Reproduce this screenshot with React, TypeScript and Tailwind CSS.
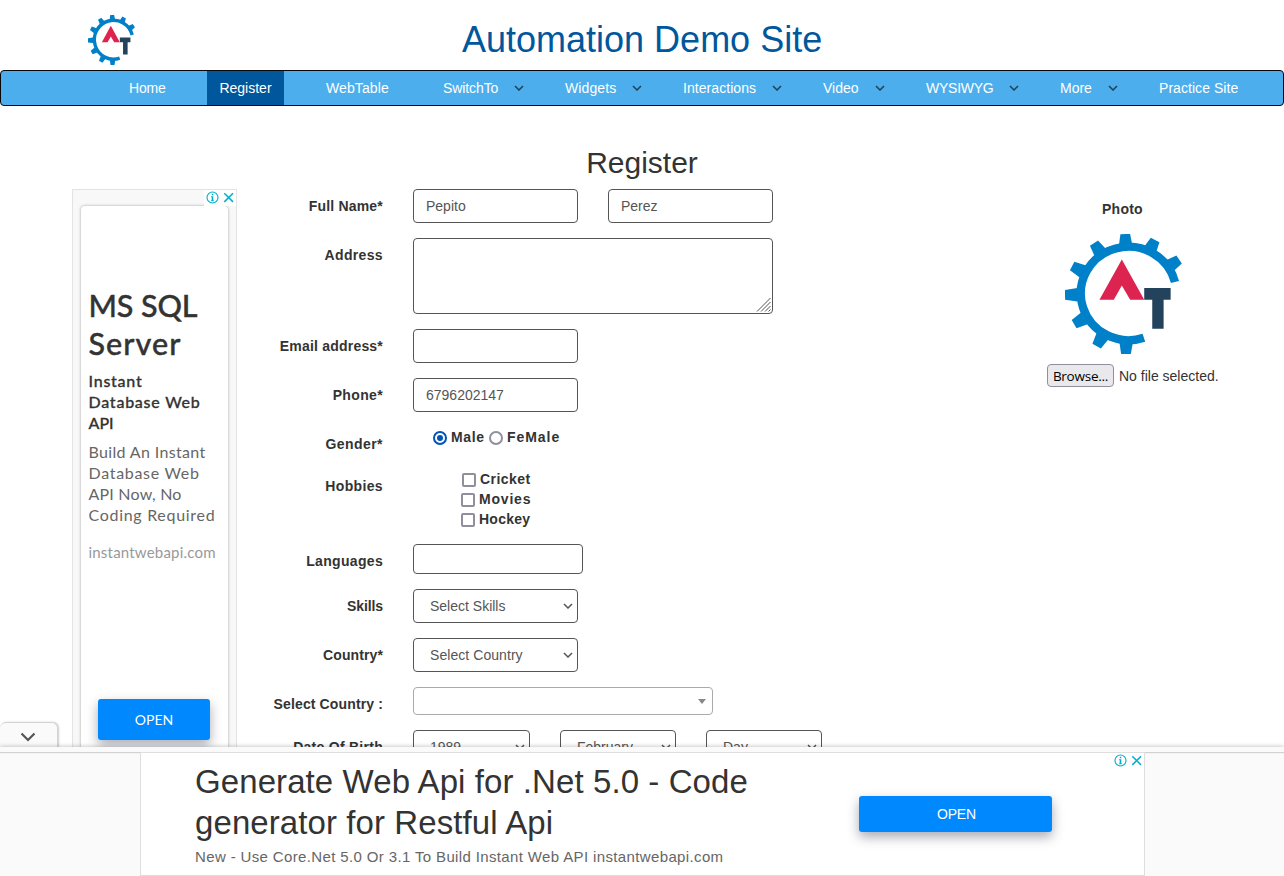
import type { ReactNode } from 'react';

const teeth = [
  { angle: -2, top: 131 },
  { angle: 27, top: 129 },
  { angle: 56, top: 125 },
  { angle: -33, top: 129 },
  { angle: -63, top: 127 },
  { angle: -91, top: 126 },
  { angle: -120, top: 129 },
  { angle: -150, top: 130 },
  { angle: -179, top: 131 },
];

function Logo({ className }: { className: string }) {
  return (
    <svg className={className} viewBox="107 131 350 362" preserveAspectRatio="none">
      <g fill="#0080c8">
        {teeth.map((t) => (
          <path key={t.angle} d={`M279 ${t.top}h29l6 37h-41z`} transform={`rotate(${t.angle} 293 312)`} />
        ))}
      </g>
      <path d="M436 276A143 141 0 1 0 343 444" fill="none" stroke="#0080c8" strokeWidth="25" />
      <path d="M277 208l67 121h-42l-25-43-24 43h-43z" fill="#dd2350" />
      <path d="M344 294h79v35h-21v88h-34v-88h-24z" fill="#23435c" />
    </svg>
  );
}

function Chevron({ className = '' }: { className?: string }) {
  return (
    <svg className={`h-[6px] w-[10px] shrink-0 ${className}`} viewBox="0 0 10 6" fill="none" stroke="currentColor" strokeWidth="1.5">
      <path d="M1 1l4 4 4-4" />
    </svg>
  );
}

const navItems = [
  { label: 'SwitchTo', width: 'w-[122px]', spacing: 'tracking-[-0.1px]', menu: true },
  { label: 'Widgets', width: 'w-[118px]', spacing: 'tracking-[0.1px]', menu: true },
  { label: 'Interactions', width: 'w-[140px]', spacing: 'tracking-[0.06px]', menu: true },
  { label: 'Video', width: 'w-[103px]', spacing: '', menu: true },
  { label: 'WYSIWYG', width: 'w-[134px]', spacing: 'tracking-[-0.25px]', menu: true },
  { label: 'More', width: 'w-[99px]', spacing: '', menu: true },
  { label: 'Practice Site', width: 'w-[100px]', spacing: 'tracking-[0.05px]', menu: false },
];

function AdMarks() {
  return (
    <svg className="h-[13px] w-[29px]" viewBox="0 0 29 13" fill="none" stroke="#00aecd">
      <circle cx="6.5" cy="6.5" r="5.5" strokeWidth="1.1" />
      <path d="M6.5 5.3v4.7" strokeWidth="1.6" />
      <path d="M5 5.7h1.5M5 9.8h3" strokeWidth="0.8" />
      <path d="M5.8 3.5h1.5" strokeWidth="1.5" />
      <path d="M18.3 2.2l8.7 8.7M27 2.2l-8.7 8.7" strokeWidth="1.5" />
    </svg>
  );
}

function Row({ label, spacing = 'tracking-[0.2px]', children }: { label: string; spacing?: string; children: ReactNode }) {
  return (
    <div className="mb-[15px] flex">
      <div className={`w-[146px] shrink-0 pt-[7px] text-right leading-5 font-bold whitespace-nowrap ${spacing}`}>{label}</div>
      <div className="ml-[30px] flex">{children}</div>
    </div>
  );
}

const box = 'rounded-[4px] border border-[#555] bg-white text-[#555]';

function Field({ value = '', className = '' }: { value?: string; className?: string }) {
  return <input readOnly value={value} className={`${box} h-[34px] w-[165px] px-3 outline-none ${className}`} />;
}

function Picker({ value, className }: { value: string; className: string }) {
  return (
    <div className={`${box} flex h-[34px] items-center justify-between pr-[4px] pl-4 ${className}`}>
      <span>{value}</span>
      <Chevron />
    </div>
  );
}

function Radio({ checked = false }: { checked?: boolean }) {
  return (
    <span className={`mt-px mr-[4px] flex size-[14px] items-center justify-center rounded-full border-2 ${checked ? 'border-[#0053b8]' : 'border-[#8f8f9d]'}`}>
      {checked && <span className="size-[6px] rounded-full bg-[#0053b8]" />}
    </span>
  );
}

function Check({ label, className = '' }: { label: string; className?: string }) {
  return (
    <div className={`flex h-5 items-center font-bold ${className}`}>
      <span className="mt-[2px] mr-[4px] size-[14px] rounded-[2px] border-2 border-[#8f8f9d]" />
      {label}
    </div>
  );
}

function SideAd() {
  return (
    <aside className="ml-[72px] h-[600px] w-[165px] shrink-0 border border-[#e3e3e3] bg-[#f8f8f8] font-['Lato',sans-serif]">
      <div className="flex h-[16px] justify-end">
        <div className="flex w-[32px] items-start bg-white pt-px pl-[2px]"><AdMarks /></div>
      </div>
      <div className="mx-[8px] flex h-[575px] flex-col rounded-[4px] bg-white pt-[80px] pr-[8px] pl-[7.5px] shadow-[0_0_3px_rgba(0,0,0,0.35)]">
        <div className="text-[30.5px] leading-[38px] font-medium whitespace-nowrap text-[#333] [-webkit-text-stroke:0.4px_#333]">
          <div className="tracking-[-0.1px]">MS SQL</div>
          <div className="tracking-[1.05px]">Server</div>
        </div>
        <div className="mt-[8px] text-[16px] leading-[21px] font-medium tracking-[0.75px] whitespace-nowrap text-[#333] [-webkit-text-stroke:0.3px_#333]">
          Instant<br />Database Web<br /><span className="tracking-[0px]">API</span>
        </div>
        <div className="mt-[8px] text-[16px] leading-[21px] tracking-[0.7px] whitespace-nowrap text-[#666]">
          <span className="tracking-[0.35px]">Build An Instant</span><br />Database Web<br /><span className="tracking-[0.2px]">API Now, No</span><br />Coding Required
        </div>
        <div className="mt-[17px] text-[15px] leading-[20px] tracking-[0.2px] whitespace-nowrap text-[#999]">instantwebapi.com</div>
        <div className="mt-[137px] ml-[9.5px] flex h-[41px] w-[112px] shrink-0 items-center justify-center rounded-[3px] bg-[#0088ff] text-[14px] text-white shadow-[0_5px_12px_rgba(40,45,70,0.4)]">OPEN</div>
      </div>
    </aside>
  );
}

function BottomAd() {
  return (
    <div className="absolute inset-x-0 top-[722px] h-[154px]">
      <div className="flex h-[25px] w-[58px] items-center justify-center rounded-t-[6px] border-t border-r border-[#d4d4d4] bg-[#fafafa] pt-[4px] pr-[2px] shadow-[1px_0_2px_rgba(0,0,0,0.2)]">
        <svg className="h-[10px] w-[16px]" viewBox="0 0 16 10" fill="none" stroke="#555" strokeWidth="2.2"><path d="M1.5 1.5L8 8l6.5-6.5" /></svg>
      </div>
      <div className="relative flex h-[129px] flex-col bg-[#fafafa] shadow-[0_-1px_4px_rgba(0,0,0,0.2)]">
        <div className="h-[5px] shrink-0 shadow-[0_1px_1px_rgba(0,0,0,0.16)]" />
        <div className="ml-[140px] flex h-[124px] w-[1005px] border border-[#dedede] bg-white">
          <div className="w-[718px] shrink-0 pt-[8px] pl-[54px]">
            <div className="text-[33px] leading-[41px] tracking-[0.09px] whitespace-nowrap text-[#333]">Generate Web Api for .Net 5.0 - Code<br />generator for Restful Api</div>
            <div className="mt-[4px] text-[15px] leading-[20px] tracking-[0.365px] whitespace-nowrap text-[#666]">New - Use Core.Net 5.0 Or 3.1 To Build Instant Web API instantwebapi.com</div>
          </div>
          <div className="mt-[43px] flex h-[36px] w-[193px] shrink-0 items-center justify-center rounded-[3px] bg-[#0088ff] pl-[2px] text-[14px] tracking-[-0.2px] text-white shadow-[0_5px_12px_rgba(40,45,70,0.4)]">OPEN</div>
          <div className="mt-[1px] ml-[62px]"><AdMarks /></div>
        </div>
      </div>
    </div>
  );
}

export default function App() {
  return (
    <div className="relative h-[876px] w-[1284px] overflow-hidden bg-white font-['Liberation_Sans',Arial,sans-serif] text-[14px] text-[#333]">
      <header className="flex h-[70px]">
        <Logo className="mt-[15px] ml-[88px] h-[50px] w-[47px]" />
        <h1 className="mt-[20px] ml-[327px] text-[36px] leading-[40px] whitespace-nowrap text-[#00579c]">Automation Demo Site</h1>
      </header>
      <nav className="flex h-[36px] items-center rounded-[4px] border border-[#080808] bg-[#4caeec] pl-[128px] text-white">
        <span className="w-[78px] tracking-[-0.2px]">Home</span>
        <span className="flex h-full w-[77px] items-center justify-center bg-[#00579c]">Register</span>
        <span className="ml-[42px] w-[117px] tracking-[0.1px]">WebTable</span>
        {navItems.map((n) => (
          <span key={n.label} className={`flex shrink-0 items-center justify-between whitespace-nowrap ${n.width} ${n.spacing}`}>
            {n.label}
            {n.menu && <Chevron className="mr-[41px] text-[#1f4055]" />}
          </span>
        ))}
      </nav>
      <h2 className="mt-[40px] h-[43px] text-center text-[30px] leading-[33px]">Register</h2>
      <main className="flex">
        <SideAd />
        <section className="w-[620px] shrink-0">
          <Row label="Full Name*">
            <Field value="Pepito" />
            <Field value="Perez" className="ml-[30px]" />
          </Row>
          <Row label="Address" spacing="tracking-[0.35px]">
            <div className={`${box} flex h-[76px] w-[360px] items-end justify-end p-px`}>
              <svg className="size-[15px]" viewBox="0 0 15 15" stroke="#555" strokeWidth="1"><path d="M1 14.5L14.5 1M5 14.5L14.5 5M9 14.5L14.5 9M12.5 14.5l2-2" /></svg>
            </div>
          </Row>
          <Row label="Email address*"><Field /></Row>
          <Row label="Phone*" spacing="tracking-[0.35px]"><Field value="6796202147" /></Row>
          <Row label="Gender*" spacing="tracking-[0.45px]">
            <div className="ml-[20px] flex h-[21px] items-center font-bold">
              <Radio checked /><span className="mr-[4px] w-[34px] tracking-[0.65px]">Male</span>
              <Radio /><span className="tracking-[0.95px]">FeMale</span>
            </div>
          </Row>
          <Row label="Hobbies" spacing="tracking-[0.35px]">
            <div className="ml-[48px] h-[60px]">
              <Check label="Cricket" className="pl-px tracking-[0.45px]" />
              <Check label="Movies" className="tracking-[0.8px]" />
              <Check label="Hockey" className="tracking-[0.25px]" />
            </div>
          </Row>
          <Row label="Languages" spacing="tracking-[0.32px]"><div className={`${box} h-[30px] w-[170px]`} /></Row>
          <Row label="Skills" spacing="tracking-[-0.1px]"><Picker value="Select Skills" className="w-[165px]" /></Row>
          <Row label="Country*" spacing="tracking-[0.1px]"><Picker value="Select Country" className="w-[165px] tracking-[0.06px]" /></Row>
          <Row label="Select Country :" spacing="tracking-[0.13px]">
            <div className="flex h-[28px] w-[300px] items-center justify-end rounded-[4px] border border-[#aaa] pr-[6px]">
              <svg className="h-[5px] w-[8px]" viewBox="0 0 8 5"><path d="M0 0h8L4 5z" fill="#888" /></svg>
            </div>
          </Row>
          <Row label="Date Of Birth" spacing="tracking-[0.27px]">
            <Picker value="1989" className="w-[117px]" />
            <Picker value="February" className="ml-[30px] w-[116px]" />
            <Picker value="Day" className="ml-[30px] w-[116px]" />
          </Row>
        </section>
        <section className="ml-[190px] flex w-[172px] flex-col">
          <div className="mt-[10px] ml-[55px] leading-5 font-bold tracking-[0.25px]">Photo</div>
          <Logo className="mt-[15px] ml-[18px] h-[120px] w-[117px]" />
          <div className="mt-[10px] flex items-center whitespace-nowrap">
            <span className="mr-[5px] flex h-[23px] w-[67px] shrink-0 items-center justify-center rounded-[4px] border border-[#8f8f9d] bg-[#e9e9ed] pt-px font-['Open_Sans',sans-serif] text-[13.5px] tracking-[-0.25px] text-black">Browse...</span>
            <span className="mt-[2px]">No file selected.</span>
          </div>
        </section>
      </main>
      <BottomAd />
    </div>
  );
}
